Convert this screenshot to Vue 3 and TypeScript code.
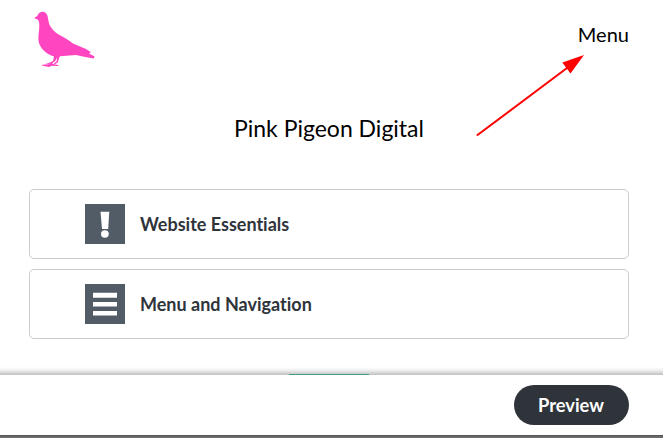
<script setup lang="ts">
type Topic = { title: string; icon: 'alert' | 'menu' }

const topics: Topic[] = [
  { title: 'Website Essentials', icon: 'alert' },
  { title: 'Menu and Navigation', icon: 'menu' },
]
</script>

<template>
  <div class="screen">
    <header class="header">
      <svg class="logo" width="64" height="58" viewBox="0 0 64 58" aria-label="Pink Pigeon">
        <path fill="#ff46c0" d="M2 7L5.3 5C6.5 1.700 9.500.300 12 1C15 1.900 16 5.500 16.300 9C16.800 14 20 18.500 25 22.500C31 26 36 28.500 41 32.500L54 38L59 41.300L57 42.500L62.700 45.500L61.500 47.500L52 45.800L44 44L28 45.300L27 47.500L25.800 51.500L22.500 53.500L26.700 54L26 55L20 54.700L17 56L13 55.300L9.500 54.500L10.500 53.700L18 53L13.500 52.600L17.500 51.800L21 50L22 45.500C14 43 9 38 7 32C5.500 26 7.500 20 7.300 14C7.400 10 6 8.500 4.500 8Z" />
        <path fill="#fff" d="M23.300 50L25.300 46.300L24.500 50.500L21.500 53L20 52.500Z" />
      </svg>
      <a class="menu">Menu</a>
    </header>

    <h1 class="title">Pink Pigeon Digital</h1>

    <main class="topics">
      <section v-for="topic in topics" :key="topic.title" class="topic">
        <svg class="topic-icon" width="40" height="40" viewBox="0 0 40 40">
          <path fill="#515c66" d="M0 0H40V40H0Z" />
          <g v-if="topic.icon === 'alert'" fill="#fff">
            <path d="M15.500 7.700H24.300L23.200 25H17Z" />
            <ellipse cx="19.900" cy="30" rx="3.900" ry="3.700" />
          </g>
          <path v-else fill="#fff" d="M8 8.700H32V13.700H8ZM8 17.900H32V22.600H8ZM8 27H32V31.600H8Z" />
        </svg>
        <span>{{ topic.title }}</span>
      </section>
    </main>

    <div class="next-button"></div>

    <footer class="footer">
      <button class="preview">Preview</button>
    </footer>
    <div class="bottom-edge"></div>

    <svg class="arrow" width="112" height="84" viewBox="0 0 112 84">
      <path d="M2.500 80L92 13" stroke="#f00" stroke-width="2" stroke-linecap="round" />
      <path d="M109 0L87.300 7.500L95.500 18.500Z" fill="#f00" />
    </svg>
  </div>
</template>

<style>
body {
  margin: 0;
  background: #fff;
}
</style>

<style scoped>
.screen {
  position: relative;
  display: flex;
  flex-direction: column;
  width: 663px;
  height: 438px;
  overflow: hidden;
  background: #fff;
  color: #000;
  font-family: Lato, "Liberation Sans", sans-serif;
  font-variant-ligatures: none;
}

.header {
  display: flex;
  justify-content: space-between;
  height: 100px;
  padding: 11px 34px 0 32px;
  box-sizing: border-box;
}

.logo {
  flex: none;
}

.menu {
  margin-top: 11px;
  font-size: 20px;
  line-height: 24px;
}

.title {
  height: 89px;
  margin: 0 5px 0 0;
  padding-top: 13px;
  box-sizing: border-box;
  text-align: center;
  font-size: 23px;
  font-weight: 400;
  line-height: 30px;
}

.topics {
  display: flex;
  flex-direction: column;
  gap: 10px;
  margin: 0 34px 0 29px;
}

.topic {
  display: flex;
  align-items: center;
  gap: 15px;
  height: 70px;
  padding-left: 55px;
  box-sizing: border-box;
  border: 1px solid #ccc;
  border-radius: 5px;
  color: #2f343b;
  font-size: 18px;
  font-weight: 700;
}

.next-button {
  position: relative;
  z-index: 3;
  width: 80px;
  height: 1px;
  margin: 35px 0 0 289px;
  background: #469c82;
}

.footer {
  position: relative;
  z-index: 2;
  display: flex;
  align-items: center;
  justify-content: flex-end;
  height: 60px;
  padding-right: 34px;
  box-sizing: border-box;
  background: #fff;
}

.footer::before {
  content: "";
  position: absolute;
  right: 0;
  bottom: 100%;
  left: 0;
  height: 8px;
  background: linear-gradient(#fff, #f0f0f1 40%, #bfc0c2);
}

.preview {
  width: 115px;
  height: 40px;
  padding: 0 1px 0 0;
  border: 0;
  border-radius: 20px;
  background: #2f343b;
  color: #fff;
  font-family: inherit;
  font-size: 18.3px;
  font-weight: 700;
}

.bottom-edge {
  height: 3px;
  background: linear-gradient(#535254, #747375);
}

.arrow {
  position: absolute;
  top: 55px;
  left: 475px;
}
</style>
